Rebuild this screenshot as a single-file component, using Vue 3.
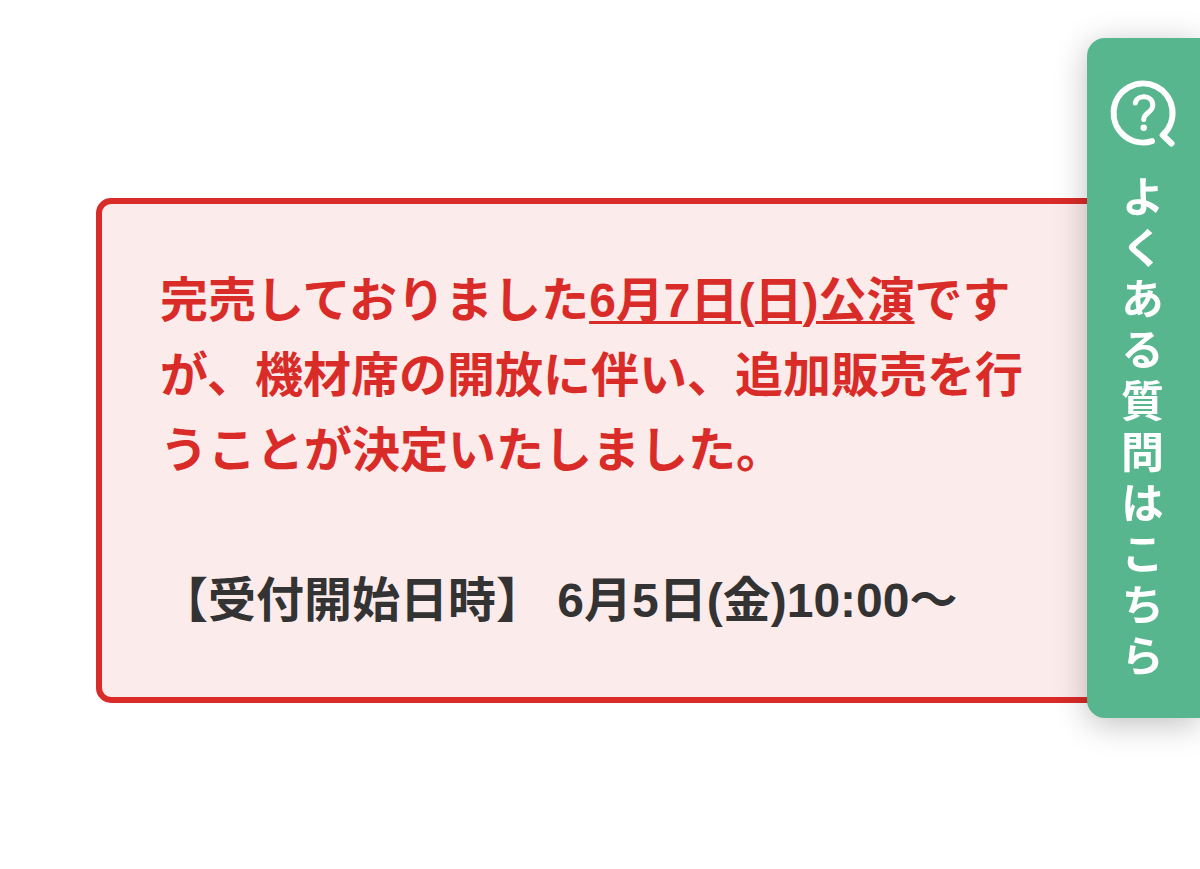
<script setup>
const faqLabel = 'よくある質問はこちら'
</script>

<template>
  <main class="page">
    <section class="notice">
      <p class="lead">
        完売しておりました<u>6月7日(日)公演</u>ですが、機材席の開放に伴い、追加販売を行うことが決定いたしました。
      </p>
      <p class="schedule">【受付開始日時】 6月5日(金)10:00〜</p>
    </section>
    <a class="faq" href="#faq">
      <svg class="faq-icon" viewBox="0 0 66 66" aria-hidden="true">
        <path class="ring" d="M61.5 63.5 L52.7 55 A29.5 29.5 0 1 0 42 61.1" />
        <path class="mark" d="M25.3 23 C27 14.5 42.8 14 42.8 25.5 C42.8 32 33.7 33 33.7 39.5" />
        <circle class="dot" cx="33.7" cy="47.7" r="3.2" />
      </svg>
      <span class="faq-label">{{ faqLabel }}</span>
    </a>
  </main>
</template>

<style>
body {
  margin: 0;
  background: #fff;
}
</style>

<style scoped>
.page {
  box-sizing: border-box;
  min-height: 100vh;
  padding: 198px 96px 120px;
  font-family: "Liberation Sans", "Noto Sans CJK JP", sans-serif;
  overflow: hidden;
}

.notice {
  padding: 59px 58px;
  border: 6px solid #d92b27;
  border-radius: 15px;
  background: #fcebeb;
  font-size: 48px;
  font-weight: 700;
  line-height: 75px;
}

.lead {
  margin: 0 0 75px;
  color: #d92b27;
}

.lead u {
  text-decoration-thickness: 3px;
  text-underline-offset: 4px;
}

.schedule {
  margin: 0;
  color: #333;
}

.faq {
  position: fixed;
  top: 38px;
  right: 0;
  box-sizing: border-box;
  display: flex;
  flex-direction: column;
  align-items: center;
  gap: 29px;
  width: 113px;
  padding: 42px 2px 33px 0;
  border-radius: 18px 0 0 18px;
  background: #58b68f;
  box-shadow: 0 6px 32px rgba(0, 0, 0, 0.25);
  color: #fff;
  text-decoration: none;
}

.faq-icon {
  width: 66px;
  height: 66px;
  overflow: visible;
}

.ring,
.mark {
  fill: none;
  stroke: #fff;
  stroke-linecap: round;
  stroke-linejoin: round;
}

.ring {
  stroke-width: 6;
}

.mark {
  stroke-width: 5;
}

.dot {
  fill: #fff;
}

.faq-label {
  writing-mode: vertical-rl;
  font-family: "Noto Sans CJK JP", sans-serif;
  font-size: 43px;
  font-weight: 700;
  line-height: 48px;
  letter-spacing: 8px;
}
</style>
